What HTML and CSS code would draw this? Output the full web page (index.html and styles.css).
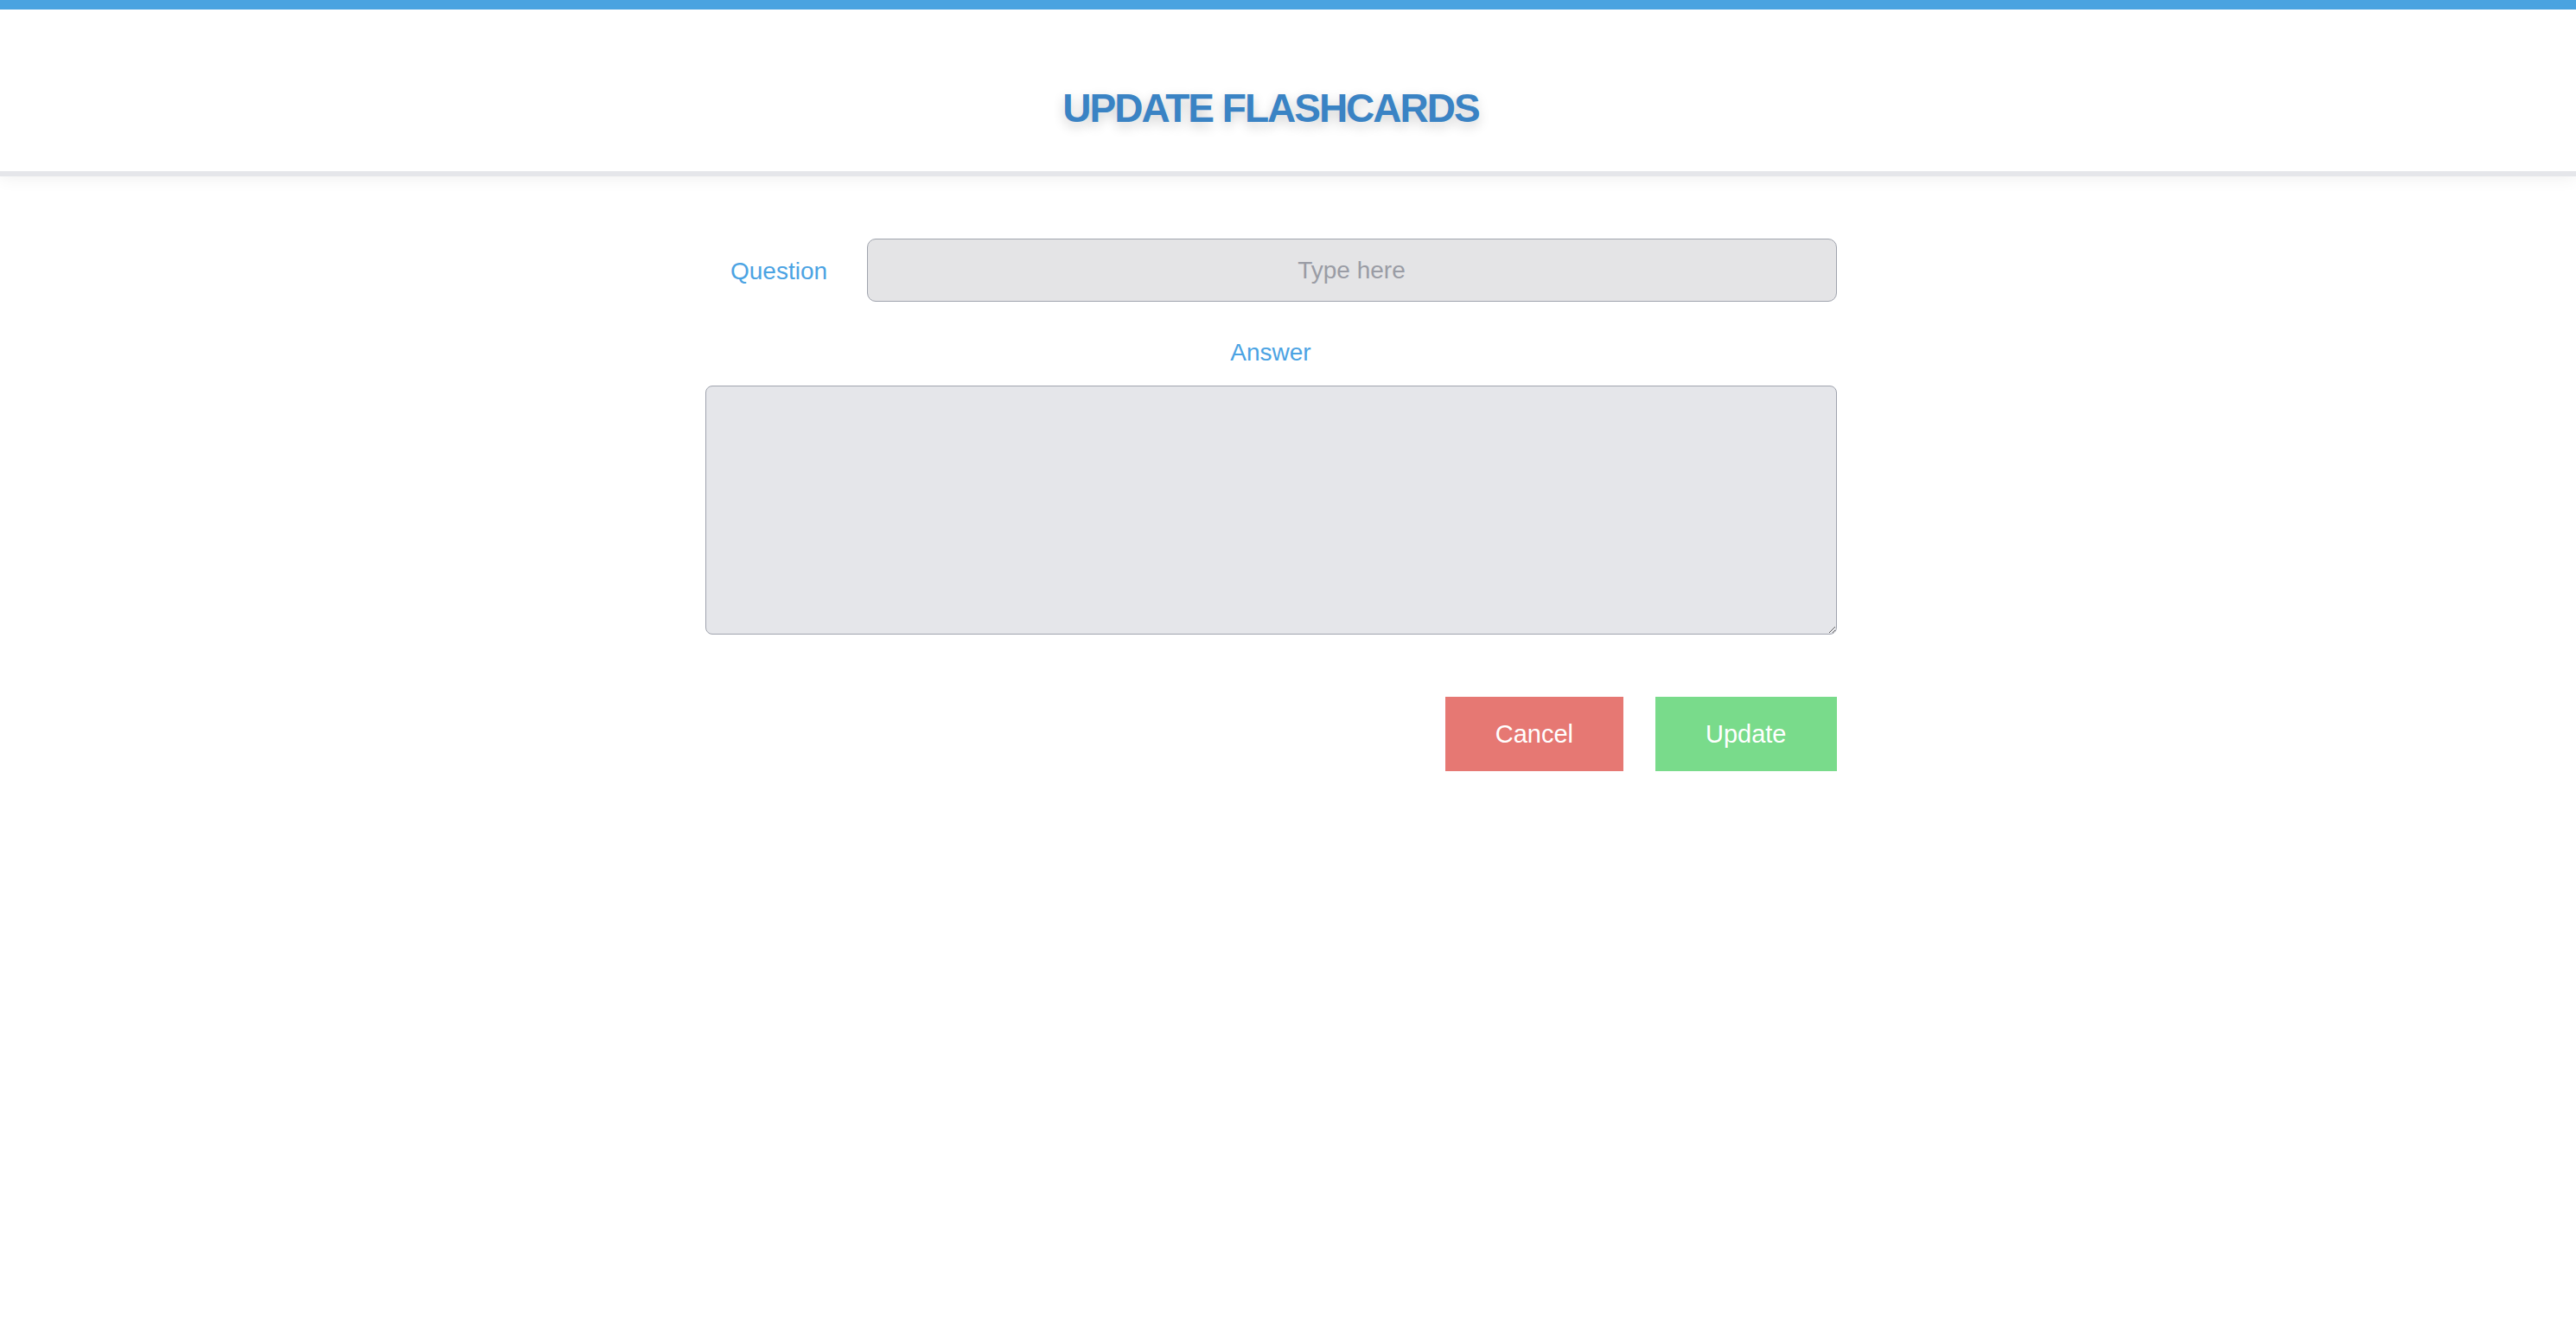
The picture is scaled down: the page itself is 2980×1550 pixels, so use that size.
FILE: index.html
```html
<!DOCTYPE html>
<html>
<head>
<meta charset="utf-8">
<title>Update Flashcards</title>
<link rel="stylesheet" href="styles.css">
</head>
<body>
<header class="header">
  <h1 class="title">UPDATE FLASHCARDS</h1>
</header>
<main class="main">
  <form class="form">
    <div class="question-row">
      <label class="label question-label" for="q">Question</label>
      <input id="q" class="question-input" type="text" placeholder="Type here">
    </div>
    <label class="label answer-label" for="a">Answer</label>
    <textarea id="a" class="answer-input"></textarea>
    <div class="actions">
      <button type="button" class="btn btn-cancel">Cancel</button>
      <button type="button" class="btn btn-update">Update</button>
    </div>
  </form>
</main>
</body>
</html>
```
FILE: styles.css
```css
html, body {
  margin: 0;
  padding: 0;
  background: #ffffff;
  font-family: "Liberation Sans", Arial, Helvetica, sans-serif;
}

.header {
  border-top: 11px solid #4aa3e0;
  background: #ffffff;
  padding: 86px 40px 45px 0;
  box-shadow: 0 6px 0 #e5e6ea, 0 9px 18px rgba(0, 0, 0, 0.06);
  position: relative;
}

.title {
  margin: 0;
  text-align: center;
  font-size: 46px;
  line-height: 56px;
  font-weight: bold;
  letter-spacing: -2px;
  color: #3a83c4;
  text-shadow: 0 5px 14px rgba(0, 0, 0, 0.2);
}

.main {
  display: flex;
  justify-content: center;
  padding: 78px 40px 0 0;
}

.form {
  width: 1309px;
  display: flex;
  flex-direction: column;
}

.label {
  color: #4ba3e3;
  font-size: 28px;
  line-height: 34px;
}

.question-row {
  display: flex;
  align-items: center;
}

.question-label {
  width: 171px;
  margin-right: 16px;
  text-align: center;
  position: relative;
  top: 1px;
}

.question-input {
  flex: 1;
  height: 73px;
  box-sizing: border-box;
  border: 1px solid #a0a4ae;
  border-radius: 10px;
  background: #e4e4e6;
  font-family: "Liberation Sans", Arial, sans-serif;
  font-size: 28px;
  text-align: center;
  color: #333;
  outline: none;
}

.question-input::placeholder {
  color: #9a9ca5;
}

.answer-label {
  text-align: center;
  margin-top: 42px;
  margin-bottom: 21px;
}

.answer-input {
  display: block;
  width: 100%;
  height: 288px;
  box-sizing: border-box;
  border: 1px solid #a0a4ae;
  border-radius: 8px;
  background: #e5e6ea;
  font-family: "Liberation Sans", Arial, sans-serif;
  font-size: 28px;
  outline: none;
  margin: 0;
}

.actions {
  display: flex;
  justify-content: flex-end;
  gap: 37px;
  margin-top: 72px;
}

.btn {
  height: 86px;
  border: none;
  padding: 0 58px;
  color: #ffffff;
  font-family: "Liberation Sans", Arial, sans-serif;
  font-size: 29px;
  cursor: pointer;
}

.btn-cancel {
  background: #e67873;
}

.btn-update {
  background: #79db8b;
}
```
